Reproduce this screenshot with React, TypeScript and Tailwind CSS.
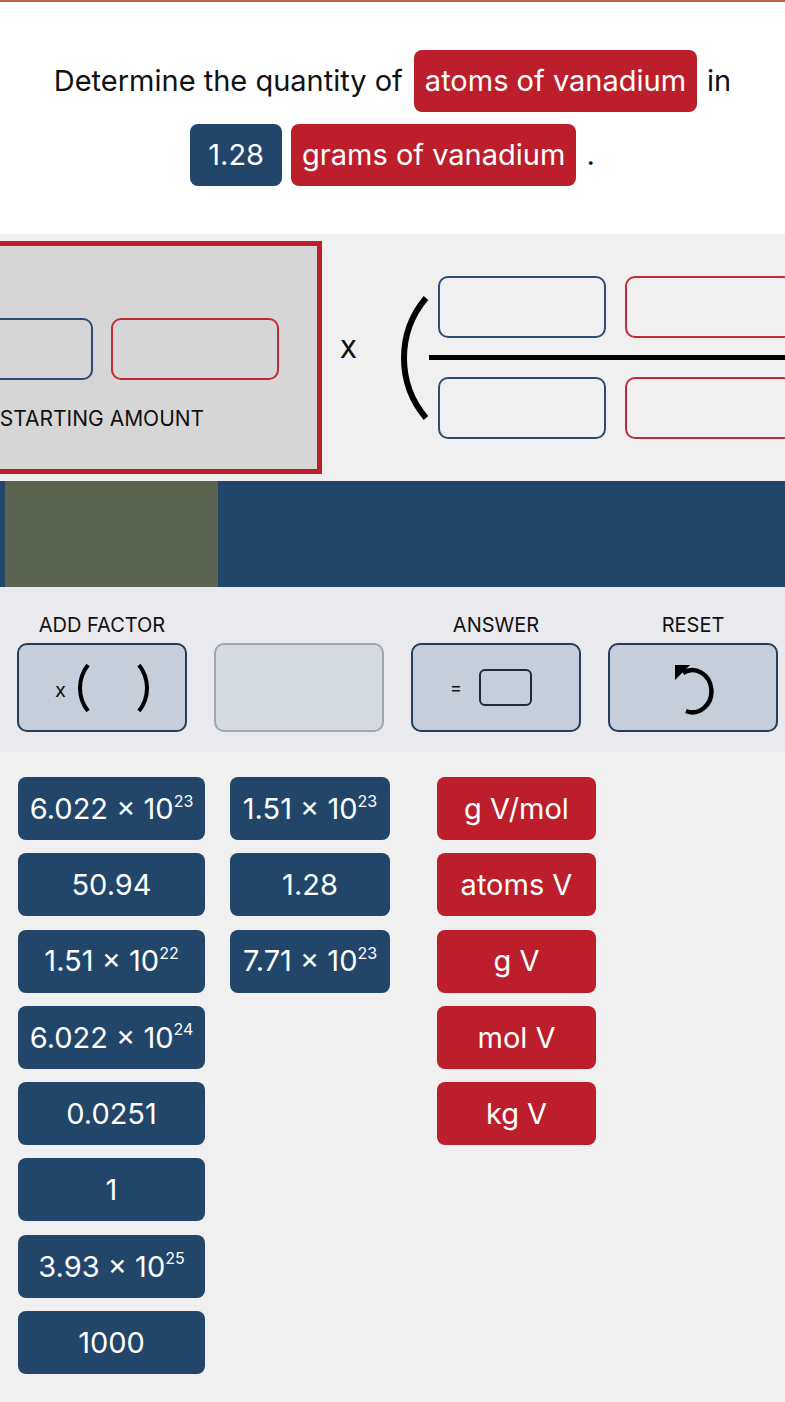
import React from 'react'

const BLUE = 'bg-[#22456a]'
const RED = 'bg-[#bc1f2b]'

type Tile = { base: string; exp?: string }

const numberTiles: Tile[][] = [
    [
        { base: '6.022 × 10', exp: '23' },
        { base: '50.94' },
        { base: '1.51 × 10', exp: '22' },
        { base: '6.022 × 10', exp: '24' },
        { base: '0.0251' },
        { base: '1' },
        { base: '3.93 × 10', exp: '25' },
        { base: '1000' },
    ],
    [
        { base: '1.51 × 10', exp: '23' },
        { base: '1.28' },
        { base: '7.71 × 10', exp: '23' },
    ],
]

const unitTiles = ['g V/mol', 'atoms V', 'g V', 'mol V', 'kg V']

function Paren({
    side,
    height,
    width,
    stroke,
}: {
    side: 'left' | 'right'
    height: number
    width: number
    stroke: number
}) {
    const half = (height - stroke) / 2
    const sag = width - stroke
    const r = (half * half + sag * sag) / (2 * sag)
    const x = side === 'left' ? width - stroke / 2 : stroke / 2
    const sweep = side === 'left' ? 0 : 1
    return (
        <svg width={width} height={height} viewBox={`0 0 ${width} ${height}`} className="shrink-0">
            <path
                d={`M${x} ${stroke / 2} A${r} ${r} 0 0 ${sweep} ${x} ${height - stroke / 2}`}
                fill="none"
                stroke="#000"
                strokeWidth={stroke}
            />
        </svg>
    )
}

function Slot({ color }: { color: 'blue' | 'red' }) {
    return (
        <div
            className={`h-[62px] w-[168px] shrink-0 rounded-[10px] border-2 ${
                color === 'blue' ? 'border-[#2c4d72]' : 'border-[#c42a35]'
            }`}
        />
    )
}

function Chip({ color, children, className = '' }: { color: string; children: React.ReactNode; className?: string }) {
    return (
        <span className={`flex h-[62px] items-center rounded-[8px] text-white ${color} ${className}`}>{children}</span>
    )
}

function TileBox({ tile, color, width }: { tile: Tile; color: string; width: string }) {
    return (
        <div className={`flex h-[63px] items-center justify-center rounded-[8px] text-[29px] text-white ${color} ${width}`}>
            <span>{tile.base}</span>
            {tile.exp && <span className="relative top-[-8px] text-[16px]">{tile.exp}</span>}
        </div>
    )
}

function UndoIcon() {
    return (
        <svg width="42" height="56" viewBox="0 0 42 56" className="shrink-0">
            <path d="M11 13 A19 21 0 1 1 14 51" fill="none" stroke="#000" strokeWidth="4.5" />
            <polygon points="3,5 18,5 3,20" fill="#000" />
        </svg>
    )
}

export default function App() {
    return (
        <div
            className="min-h-[1402px] w-[785px] overflow-hidden bg-[#f0f0f0] text-[#111]"
            style={{ fontFamily: 'Inter, "Liberation Sans", sans-serif' }}
        >
            {/* Question */}
            <div className="h-[2px] bg-[#c65b45]" />
            <div className="flex flex-col items-center gap-[12px] bg-white pt-[48px] pb-[48px] text-[29px]">
                <div className="flex items-center">
                    <span>Determine the quantity of</span>
                    <Chip color={RED} className="ml-[11px] px-[11px]">
                        atoms of vanadium
                    </Chip>
                    <span className="ml-[10px]">in</span>
                </div>
                <div className="flex items-center">
                    <Chip color={BLUE} className="px-[18px]">
                        1.28
                    </Chip>
                    <Chip color={RED} className="ml-[9px] px-[11px]">
                        grams of vanadium
                    </Chip>
                    <span className="ml-[10px]">.</span>
                </div>
            </div>

            {/* Conversion tray */}
            <div className="flex h-[247px] items-center overflow-hidden">
                <div className="ml-[-118px] flex h-[233px] w-[440px] shrink-0 flex-col items-center border-[5px] border-[#bf1f2b] bg-[#d6d6d6] pt-[72px]">
                    <div className="flex gap-[18px]">
                        <Slot color="blue" />
                        <Slot color="red" />
                    </div>
                    <div className="mt-[27px] text-[21px] leading-[24px]">STARTING AMOUNT</div>
                </div>
                <span className="relative top-[-8px] ml-[18px] text-[24px] font-medium">X</span>
                <div className="ml-[44px]">
                    <Paren side="left" height={126} width={28} stroke={6} />
                </div>
                <div className="flex shrink-0 flex-col">
                    <div className="flex gap-[19px] pl-[9px]">
                        <Slot color="blue" />
                        <Slot color="red" />
                    </div>
                    <div className="my-[17px] h-[5px] w-[400px] bg-black" />
                    <div className="flex gap-[19px] pl-[9px]">
                        <Slot color="blue" />
                        <Slot color="red" />
                    </div>
                </div>
            </div>

            {/* Progress bar */}
            <div className="flex h-[106px] bg-[#22456a] pl-[5px]">
                <div className="w-[213px] bg-[#5b6451]" />
            </div>

            {/* Controls */}
            <div className="flex gap-[27px] bg-[#e9e9ee] pt-[26px] pb-[20px] pl-[17px]">
                <div className="flex w-[170px] flex-col items-center">
                    <span className="h-[24px] text-[20px] leading-[24px]">ADD FACTOR</span>
                    <button className="mt-[6px] flex h-[89px] w-full items-center justify-center rounded-[10px] border-2 border-[#253d58] bg-[#c5ced9]">
                        <span className="mr-[12px] mt-[4px] text-[20px]">x</span>
                        <Paren side="left" height={50} width={12} stroke={4} />
                        <span className="w-[47px]" />
                        <Paren side="right" height={50} width={12} stroke={4} />
                    </button>
                </div>
                <div className="flex w-[170px] flex-col items-center">
                    <span className="h-[24px]" />
                    <div className="mt-[6px] h-[89px] w-full rounded-[10px] border-2 border-[#9ea7b3] bg-[#d6dbe2]" />
                </div>
                <div className="flex w-[170px] flex-col items-center">
                    <span className="h-[24px] text-[20px] leading-[24px]">ANSWER</span>
                    <button className="mt-[6px] flex h-[89px] w-full items-center justify-center rounded-[10px] border-2 border-[#253d58] bg-[#c5ced9] pr-[10px]">
                        <span className="mr-[17px] text-[18px] leading-none">=</span>
                        <span className="h-[37px] w-[53px] rounded-[6px] border-2 border-[#1d2a38]" />
                    </button>
                </div>
                <div className="flex w-[170px] flex-col items-center">
                    <span className="h-[24px] text-[20px] leading-[24px]">RESET</span>
                    <button className="mt-[6px] flex h-[89px] w-full items-center justify-center rounded-[10px] border-2 border-[#253d58] bg-[#c5ced9]">
                        <UndoIcon />
                    </button>
                </div>
            </div>

            {/* Answer tiles */}
            <div className="flex pt-[25px] pb-[28px]">
                <div className="ml-[18px] flex flex-col gap-[13.3px]">
                    {numberTiles[0].map((t, i) => (
                        <TileBox key={i} tile={t} color={BLUE} width="w-[187px]" />
                    ))}
                </div>
                <div className="ml-[25px] flex flex-col gap-[13.3px]">
                    {numberTiles[1].map((t, i) => (
                        <TileBox key={i} tile={t} color={BLUE} width="w-[160px]" />
                    ))}
                </div>
                <div className="ml-[47px] flex flex-col gap-[13.3px]">
                    {unitTiles.map((u) => (
                        <TileBox key={u} tile={{ base: u }} color={RED} width="w-[159px]" />
                    ))}
                </div>
            </div>
        </div>
    )
}
